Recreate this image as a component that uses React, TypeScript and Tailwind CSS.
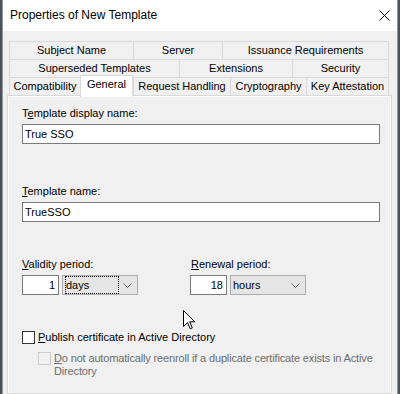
import React from "react";

function Tab({ w, label, last }: { w: number; label: string; last?: boolean }) {
  return (
    <div
      className={`h-full flex items-center justify-center border-t border-l border-[#d9d9d9] leading-[15px] whitespace-nowrap ${last ? "border-r" : ""}`}
      style={{ width: w }}
    >
      {label}
    </div>
  );
}

function Chevron() {
  return (
    <svg width="9" height="5" viewBox="0 0 9 5" className="shrink-0">
      <polyline points="0.5,0.5 4.5,4.5 8.5,0.5" fill="none" stroke="#606060" strokeWidth="1" />
    </svg>
  );
}

export default function App() {
  return (
    <div className="w-[400px] h-[394px] overflow-hidden flex bg-[#4a5260] relative font-['Liberation_Sans',Arial,sans-serif] text-[11px] text-black">
      <div className="ml-[2px] w-[396px] h-full flex flex-col border-x border-[#9a9a9a] bg-[#f0f0f0]">
        {/* Title bar */}
        <div className="h-[31px] shrink-0 bg-white flex items-center justify-between pl-[7px] pr-[7px]">
          <span className="text-[12px] leading-[15px]">Properties of New Template</span>
          <svg width="11" height="11" viewBox="0 0 11 11">
            <line x1="0.5" y1="0.5" x2="10.5" y2="10.5" stroke="#000" strokeWidth="1" />
            <line x1="10.5" y1="0.5" x2="0.5" y2="10.5" stroke="#000" strokeWidth="1" />
          </svg>
        </div>

        {/* Body */}
        <div className="flex-1 flex flex-col pt-[10px] pl-[4px]">
          {/* Tabs */}
          <div className="ml-[2px] w-[380px] flex flex-col">
            <div className="flex h-[18px]">
              <Tab w={124} label="Subject Name" />
              <Tab w={89} label="Server" />
              <Tab w={167} label="Issuance Requirements" last />
            </div>
            <div className="flex h-[18px]">
              <Tab w={170} label="Superseded Templates" />
              <Tab w={113} label="Extensions" />
              <Tab w={97} label="Security" last />
            </div>
            <div className="flex h-[18px]">
              <Tab w={71} label="Compatibility" />
              <div className="relative z-10 self-start -mt-[2px] h-[22px] w-[53px] bg-white border-x border-t border-[#d9d9d9] flex justify-center pt-[1px] leading-[15px]">
                General
              </div>
              <Tab w={97} label="Request Handling" />
              <Tab w={76} label="Cryptography" />
              <Tab w={83} label="Key Attestation" last />
            </div>
          </div>

          {/* Panel */}
          <div className="relative z-0 w-[385px] flex-1 border border-[#d9d9d9] flex">
            <div className="flex-1 border-x border-t border-white bg-[#f0f0f0] flex flex-col pt-[9px] pl-[13px]">
              <div className="leading-[15px]">
                T<span className="underline">e</span>mplate display name:
              </div>
              <div className="mt-[3px] w-[358px] h-[20px] bg-white border border-[#7a7a7a] flex items-center pl-[2px] leading-[15px]">
                True SSO
              </div>

              <div className="mt-[40px] leading-[15px]">
                <span className="underline">T</span>emplate name:
              </div>
              <div className="mt-[3px] w-[358px] h-[20px] bg-white border border-[#7a7a7a] flex items-center pl-[2px] leading-[15px]">
                TrueSSO
              </div>

              <div className="mt-[35px] flex">
                <div className="w-[168px] flex flex-col">
                  <div className="leading-[15px]">
                    <span className="underline">V</span>alidity period:
                  </div>
                  <div className="mt-[3px] flex gap-[3px]">
                    <div className="w-[37px] h-[20px] bg-white border border-[#7a7a7a] flex items-center justify-end pr-[3px] leading-[15px]">
                      1
                    </div>
                    <div className="w-[76px] h-[20px] bg-[#e5e5e5] border border-[#adadad] flex items-center justify-between pl-[2px] pr-[5px]">
                      <div className="w-[54px] h-[18px] border border-dotted border-black flex items-center leading-[15px]">
                        days
                      </div>
                      <Chevron />
                    </div>
                  </div>
                </div>
                <div className="flex flex-col">
                  <div className="leading-[15px] ml-[1px]">
                    <span className="underline">R</span>enewal period:
                  </div>
                  <div className="mt-[3px] flex gap-[3px]">
                    <div className="w-[37px] h-[20px] bg-white border border-[#7a7a7a] flex items-center justify-end pr-[3px] leading-[15px]">
                      18
                    </div>
                    <div className="w-[76px] h-[20px] bg-[#e5e5e5] border border-[#adadad] flex items-center justify-between pl-[2px] pr-[5px]">
                      <span className="leading-[15px]">hours</span>
                      <Chevron />
                    </div>
                  </div>
                </div>
              </div>

              <div className="mt-[36px] flex items-center h-[13px] gap-[3px]">
                <div className="w-[13px] h-[13px] bg-white border border-[#333333] shrink-0" />
                <span className="leading-[13px] whitespace-nowrap">
                  <span className="underline">P</span>ublish certificate in Active Directory
                </span>
              </div>

              <div className="mt-[8px] ml-[16px] flex items-start gap-[3px]">
                <div className="w-[13px] h-[13px] bg-[#f0f0f0] border border-[#cccccc] shrink-0" />
                <span className="leading-[13px] text-[#6d6d6d] whitespace-nowrap tracking-[-0.15px]">
                  <span className="underline">D</span>o not automatically reenroll if a duplicate certificate exists in Active
                  <br />
                  Directory
                </span>
              </div>
            </div>
          </div>
        </div>
      </div>

      {/* Mouse cursor */}
      <svg
        className="absolute left-[183px] top-[310px]"
        width="13"
        height="20"
        viewBox="0 0 13 20"
      >
        <path
          d="M0.5 0.5 L0.5 16.5 L4.5 12.7 L7.2 18.8 L9.3 17.9 L6.7 11.8 L11.8 11.8 Z"
          fill="#fff"
          stroke="#000"
          strokeWidth="1"
          strokeLinejoin="miter"
        />
      </svg>
    </div>
  );
}
